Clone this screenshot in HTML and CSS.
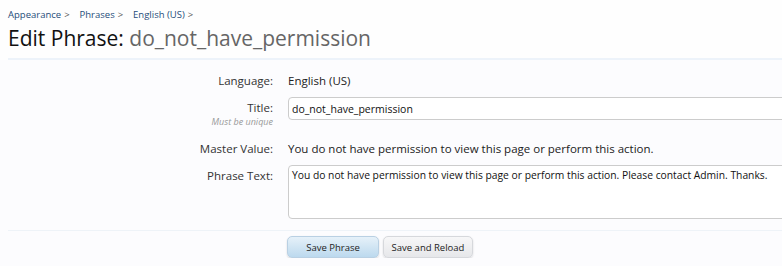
FILE: index.html
```html
<!DOCTYPE html>
<html>
  <head>
    <meta charset="utf-8">
    <title>Edit Phrase: do_not_have_permission</title>
    <link rel="stylesheet" href="styles.css">
  </head>
  <body>
    <div class="title-bar">
      <nav class="breadcrumb"><a href="#">Appearance</a><span class="sep">&gt;</span><a href="#">Phrases</a><span class="sep">&gt;</span><a href="#">English (US)</a><span class="sep">&gt;</span></nav>
      <h1>Edit Phrase: <em>do_not_have_permission</em></h1>
    </div>
    <form class="phrase-form">
      <div class="rows">
        <dl class="row">
          <dt>Language:</dt>
          <dd>English (US)</dd>
        </dl>
        <dl class="row">
          <dt>Title:<span class="hint">Must be unique</span></dt>
          <dd><input type="text" class="text-ctrl" value="do_not_have_permission"></dd>
        </dl>
        <dl class="row">
          <dt>Master Value:</dt>
          <dd>You do not have permission to view this page or perform this action.</dd>
        </dl>
        <dl class="row">
          <dt>Phrase Text:</dt>
          <dd><textarea class="text-ctrl area">You do not have permission to view this page or perform this action. Please contact Admin. Thanks.</textarea></dd>
        </dl>
      </div>
      <div class="submit-unit">
        <button type="button" class="button primary">Save Phrase</button>
        <button type="button" class="button">Save and Reload</button>
      </div>
    </form>
  </body>
</html>
```

FILE: styles.css
```css
body, html {
    margin: 0;
    padding: 0;
    background: #fcfcfe;
    font-family: 'Open Sans', sans-serif;
    font-size: 11.5px;
    color: #222;
}

.title-bar {
    padding: 8px 0 0 8px;
    background: #fefefe;
}

.breadcrumb {
    font-size: 9.5px;
    line-height: 14px;
}

.breadcrumb a {
    color: #1e4d7a;
    text-decoration: none;
}

.breadcrumb .sep {
    color: #555;
    margin: 0 10px 0 3px;
}

h1 {
    margin: 0;
    padding: 2px 0 6px;
    font-size: 21px;
    font-weight: 400;
    line-height: 28px;
    color: #111;
    border-bottom: 2px solid #edf3fa;
}

h1 em {
    font-style: normal;
    color: #666;
}

.phrase-form {
    margin-left: 8px;
}

.rows {
    padding: 10px 0 3px;
    border-bottom: 1px solid #eef3f8;
}

.row {
    display: flex;
    margin: 0 0 8px;
    align-items: flex-start;
}

.row dt {
    width: 265px;
    flex: none;
    text-align: right;
    color: #333;
    padding-top: 3px;
    line-height: 16px;
}

.row dd {
    margin: 0 0 0 15px;
    flex: 1;
    padding-top: 3px;
    line-height: 16px;
    min-width: 0;
}

.hint {
    display: block;
    margin-bottom: 2px;
    font-size: 9px;
    font-style: italic;
    color: #999;
    line-height: 12px;
}

.row dd:has(.text-ctrl) {
    padding-top: 0;
}

.text-ctrl {
    box-sizing: border-box;
    display: block;
    width: 520px;
    height: 23px;
    margin: 0;
    padding: 2px 3px;
    font-family: 'Open Sans', sans-serif;
    font-size: 10.5px;
    color: #111;
    background: #fff;
    border: 1px solid #ccc;
    border-radius: 4px;
}

.text-ctrl.area {
    height: 54px;
    resize: none;
    font-size: 10.3px;
    line-height: 14px;
}

.submit-unit {
    display: flex;
    gap: 4px;
    padding: 5px 0 0 279px;
}

.button {
    width: 90px;
    height: 22px;
    padding: 0;
    font-family: 'Open Sans', sans-serif;
    font-size: 9.5px;
    color: #222;
    border: 1px solid #d6d8dc;
    border-radius: 5px;
    background: linear-gradient(#f7f7f8, #e6e7ea);
    box-shadow: 0 1px 2px rgba(0, 0, 0, 0.15);
}

.button.primary {
    width: 92px;
    background: linear-gradient(#e6f1f9, #bcd9ee);
    border-color: #b9d0e3;
}
```
